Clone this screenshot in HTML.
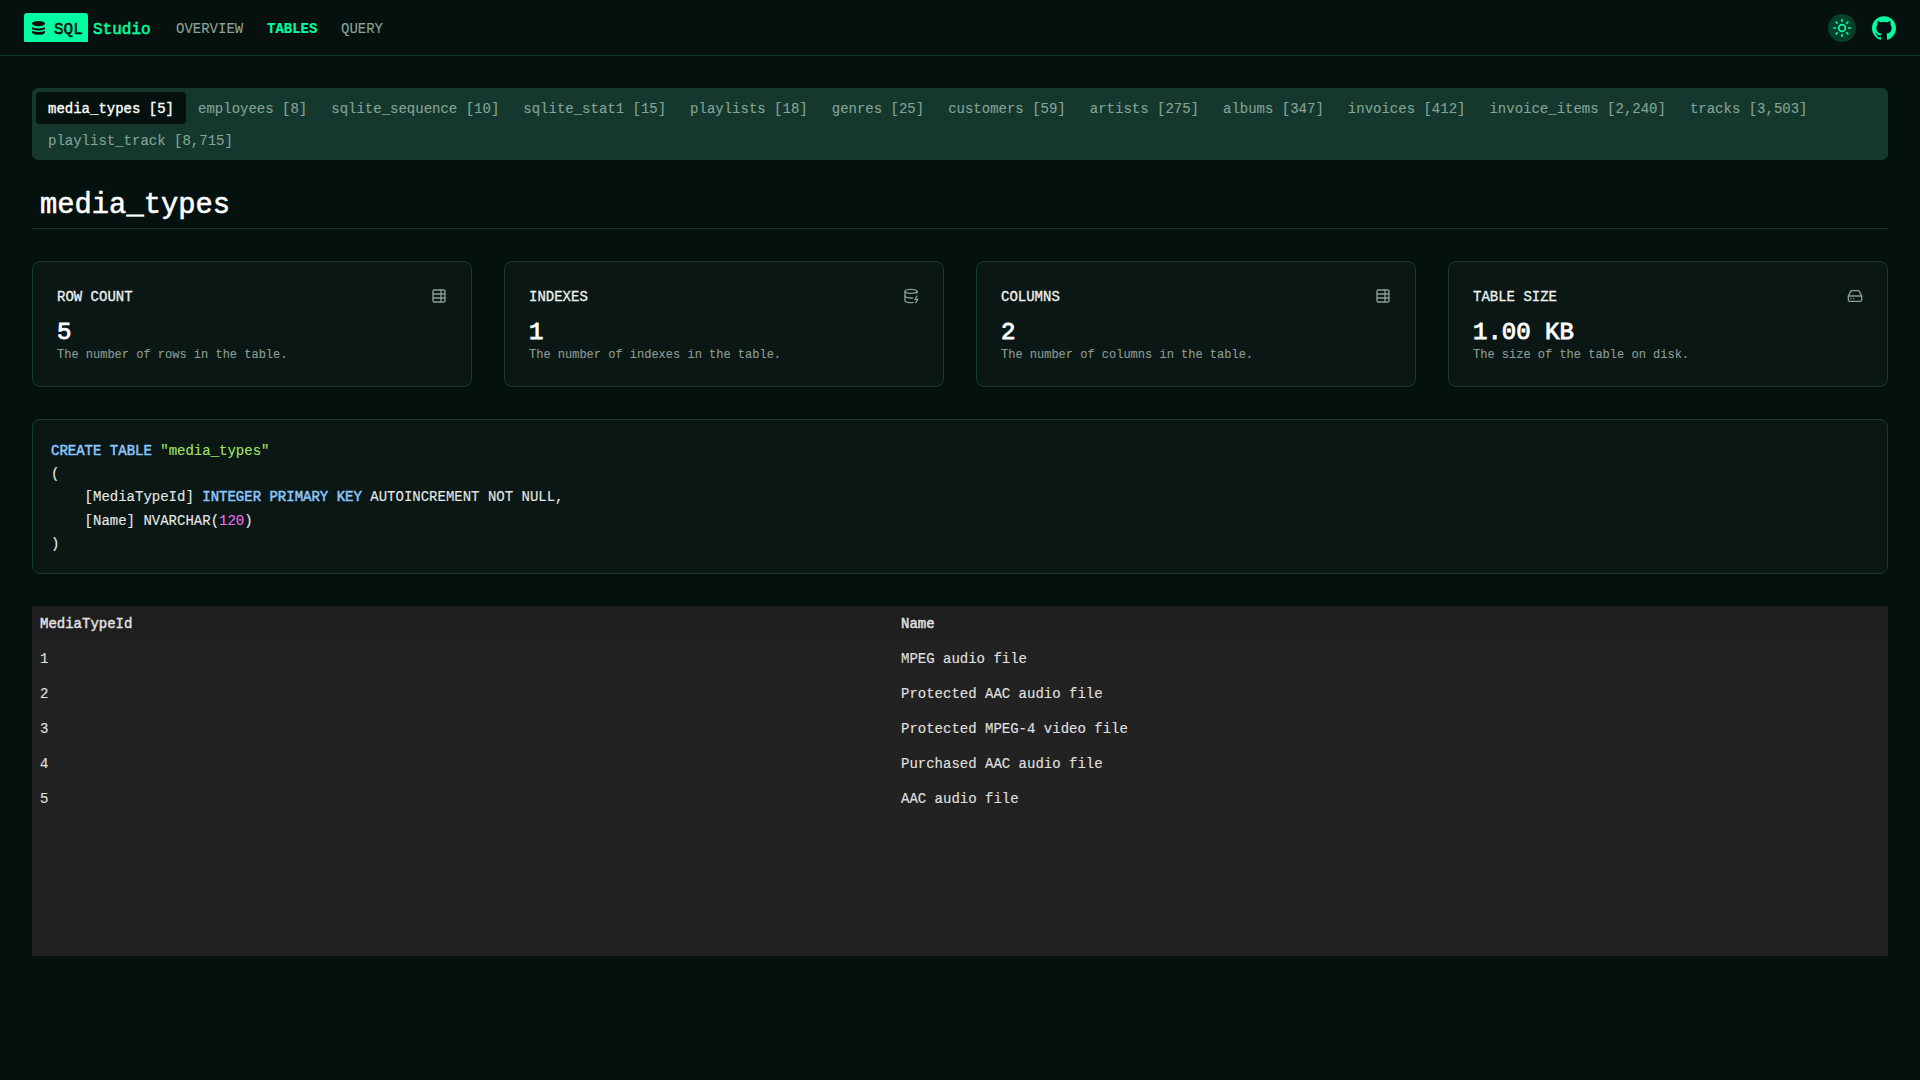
<!DOCTYPE html>
<html>
<head>
<meta charset="utf-8">
<style>
*{box-sizing:border-box;margin:0;padding:0}
html,body{width:1920px;height:1080px;overflow:hidden}
body{background:#05110e;font-family:"Liberation Mono",monospace;color:#f2f5f4;position:relative;-webkit-text-stroke-width:0.12px}
.hdr{position:absolute;left:0;top:0;width:1920px;height:56px;border-bottom:1px solid #143a2d}
.logo{position:absolute;left:24px;top:13px;width:64px;height:29px;background:#00ffa3;border-radius:3px 3px 1px 1px}
.logo svg{position:absolute;left:8px;top:8px}
.logo span{position:absolute;left:30px;top:3px;line-height:29px;font-size:16px;color:#0a0a0a;-webkit-text-stroke:0.5px #0a0a0a}
.studio{position:absolute;left:93px;top:16px;line-height:29px;font-size:16px;color:#00ffa3;-webkit-text-stroke:0.5px #00ffa3}
.nav{position:absolute;top:19px;line-height:20px;font-size:14px;color:#8ca398}
.nav.act{color:#00ffa3;font-weight:bold}
.sun{position:absolute;left:1828px;top:14px;width:28px;height:28px;border-radius:50%;background:#04402a}
.sun svg{position:absolute;left:4px;top:4px}
.gh{position:absolute;left:1872px;top:16px}
.tabs{position:absolute;left:32px;top:88px;width:1856px;height:72px;background:#14382d;border-radius:6px;padding:4px}
.tab{float:left;height:32px;line-height:34px;padding:0 12px;font-size:14px;color:#86a396;border-radius:4px;white-space:pre}
.tab.act{background:#05110e;color:#fff;-webkit-text-stroke:0.35px #fff}
.title{position:absolute;left:40px;top:184px;font-size:28.8px;line-height:44px;color:#fff;-webkit-text-stroke:0.55px #fff}
.tline{position:absolute;left:32px;top:228px;width:1856px;height:1px;background:#143a2d}
.card{position:absolute;top:261px;width:440px;height:126px;background:#0a1714;border:1px solid #163a2e;border-radius:8px}
.card .ct{position:absolute;left:24px;top:25px;font-size:14px;line-height:20px;color:#eef2f0;-webkit-text-stroke:0.3px #eef2f0}
.card .ci{position:absolute;right:24px;top:26px}
.card .cv{position:absolute;left:24px;top:55px;font-size:24px;line-height:32px;color:#fff;-webkit-text-stroke:0.9px #fff}
.card .cd{position:absolute;left:24px;top:85px;font-size:12px;line-height:16px;color:#8a9d94}
.code{position:absolute;left:32px;top:419px;width:1856px;height:155px;background:#0a1714;border:1px solid #163a2e;border-radius:8px;padding:20px 18px;font-size:14px;line-height:23.2px;color:#e6e9e8;white-space:pre}
.kw{color:#8cc6ff;-webkit-text-stroke:0.5px #8cc6ff}
.str{color:#a3e36b}
.num{color:#ec70f0}
.tbl{position:absolute;left:32px;top:606px;width:1856px;height:350px;background:#222222}
table{border-collapse:collapse;width:1856px;font-size:14px;color:#e0e0e0}
th{background:#1e1e1e;height:35px;text-align:left;padding:0 8px;font-weight:normal;-webkit-text-stroke:0.4px #e4e4e4;color:#e4e4e4}
td{height:35px;padding:0 8px}
</style>
</head>
<body>
<div class="hdr">
  <div class="logo">
    <svg width="13" height="14" viewBox="0 0 13 14"><ellipse cx="6.5" cy="2.6" rx="6.5" ry="2.6" fill="#0a0a0a"/><path d="M0 6.2Q6.5 8.6 13 6.2V8.2Q6.5 10.6 0 8.2Z" fill="#0a0a0a"/><path d="M0 10Q6.5 12 13 10V11.6A6.5 2.2 0 0 1 0 11.6Z" fill="#0a0a0a"/></svg>
    <span>SQL</span>
  </div>
  <div class="studio">Studio</div>
  <div class="nav" style="left:176px">OVERVIEW</div>
  <div class="nav act" style="left:267px">TABLES</div>
  <div class="nav" style="left:341px">QUERY</div>
  <div class="sun"><svg width="20" height="20" viewBox="0 0 24 24" fill="none" stroke="#00ffa3" stroke-width="2" stroke-linecap="round"><circle cx="12" cy="12" r="4"/><path d="M12 2v2M12 20v2M4.93 4.93l1.41 1.41M17.66 17.66l1.41 1.41M2 12h2M20 12h2M6.34 17.66l-1.41 1.41M19.07 4.93l-1.41 1.41"/></svg></div>
  <svg class="gh" width="24" height="24" viewBox="0 0 24 24"><path fill="#00ffa3" d="M12 .297c-6.63 0-12 5.373-12 12 0 5.303 3.438 9.8 8.205 11.385.6.113.82-.258.82-.577 0-.285-.01-1.04-.015-2.04-3.338.724-4.042-1.61-4.042-1.61C4.422 18.07 3.633 17.7 3.633 17.7c-1.087-.744.084-.729.084-.729 1.205.084 1.838 1.236 1.838 1.236 1.07 1.835 2.809 1.305 3.495.998.108-.776.417-1.305.76-1.605-2.665-.3-5.466-1.332-5.466-5.93 0-1.31.465-2.38 1.235-3.22-.135-.303-.54-1.523.105-3.176 0 0 1.005-.322 3.3 1.23.96-.267 1.98-.399 3-.405 1.020.006 2.04.138 3 .405 2.28-1.552 3.285-1.23 3.285-1.23.645 1.653.24 2.873.12 3.176.765.84 1.23 1.91 1.23 3.22 0 4.61-2.805 5.625-5.475 5.92.42.36.81 1.096.81 2.22 0 1.606-.015 2.896-.015 3.286 0 .315.21.69.825.57C20.565 22.092 24 17.592 24 12.297c0-6.627-5.373-12-12-12"/></svg>
</div>

<div class="tabs">
  <div class="tab act">media_types [5]</div>
  <div class="tab">employees [8]</div>
  <div class="tab">sqlite_sequence [10]</div>
  <div class="tab">sqlite_stat1 [15]</div>
  <div class="tab">playlists [18]</div>
  <div class="tab">genres [25]</div>
  <div class="tab">customers [59]</div>
  <div class="tab">artists [275]</div>
  <div class="tab">albums [347]</div>
  <div class="tab">invoices [412]</div>
  <div class="tab">invoice_items [2,240]</div>
  <div class="tab">tracks [3,503]</div>
  <div class="tab">playlist_track [8,715]</div>
</div>

<div class="title">media_types</div>
<div class="tline"></div>

<div class="card" style="left:32px"><div class="ct">ROW COUNT</div><div class="ci"><svg width="16" height="16" viewBox="0 0 24 24" fill="none" stroke="#8a9d94" stroke-width="2" stroke-linecap="round" stroke-linejoin="round"><path d="M15 3v18"/><rect width="18" height="18" x="3" y="3" rx="2"/><path d="M21 9H3"/><path d="M21 15H3"/></svg></div><div class="cv">5</div><div class="cd">The number of rows in the table.</div></div>
<div class="card" style="left:504px"><div class="ct">INDEXES</div><div class="ci"><svg width="16" height="16" viewBox="0 0 24 24" fill="none" stroke="#8a9d94" stroke-width="2" stroke-linecap="round" stroke-linejoin="round"><ellipse cx="12" cy="5" rx="9" ry="3"/><path d="M3 5V19A9 3 0 0 0 15 21.84"/><path d="M21 5V8"/><path d="M21 12L18 17H22L19 22"/><path d="M3 12A9 3 0 0 0 14.59 14.87"/></svg></div><div class="cv">1</div><div class="cd">The number of indexes in the table.</div></div>
<div class="card" style="left:976px"><div class="ct">COLUMNS</div><div class="ci"><svg width="16" height="16" viewBox="0 0 24 24" fill="none" stroke="#8a9d94" stroke-width="2" stroke-linecap="round" stroke-linejoin="round"><path d="M15 3v18"/><rect width="18" height="18" x="3" y="3" rx="2"/><path d="M21 9H3"/><path d="M21 15H3"/></svg></div><div class="cv">2</div><div class="cd">The number of columns in the table.</div></div>
<div class="card" style="left:1448px"><div class="ct">TABLE SIZE</div><div class="ci"><svg width="16" height="16" viewBox="0 0 24 24" fill="none" stroke="#8a9d94" stroke-width="2" stroke-linecap="round" stroke-linejoin="round"><line x1="22" x2="2" y1="12" y2="12"/><path d="M5.45 5.11 2 12v6a2 2 0 0 0 2 2h16a2 2 0 0 0 2-2v-6l-3.45-6.89A2 2 0 0 0 16.76 4H7.24a2 2 0 0 0-1.79 1.11z"/><line x1="6" x2="6.01" y1="16" y2="16"/><line x1="10" x2="10.01" y1="16" y2="16"/></svg></div><div class="cv">1.00 KB</div><div class="cd">The size of the table on disk.</div></div>


<div class="code"><span class="kw">CREATE</span> <span class="kw">TABLE</span> <span class="str">"media_types"</span>
(
    [MediaTypeId] <span class="kw">INTEGER</span> <span class="kw">PRIMARY</span> <span class="kw">KEY</span> AUTOINCREMENT NOT NULL,
    [Name] NVARCHAR(<span class="num">120</span>)
)</div>

<div class="tbl"><table><colgroup><col style="width:861px"><col></colgroup><tr><th>MediaTypeId</th><th>Name</th></tr><tr><td>1</td><td>MPEG audio file</td></tr><tr><td>2</td><td>Protected AAC audio file</td></tr><tr><td>3</td><td>Protected MPEG-4 video file</td></tr><tr><td>4</td><td>Purchased AAC audio file</td></tr><tr><td>5</td><td>AAC audio file</td></tr></table></div>
</body>
</html>
